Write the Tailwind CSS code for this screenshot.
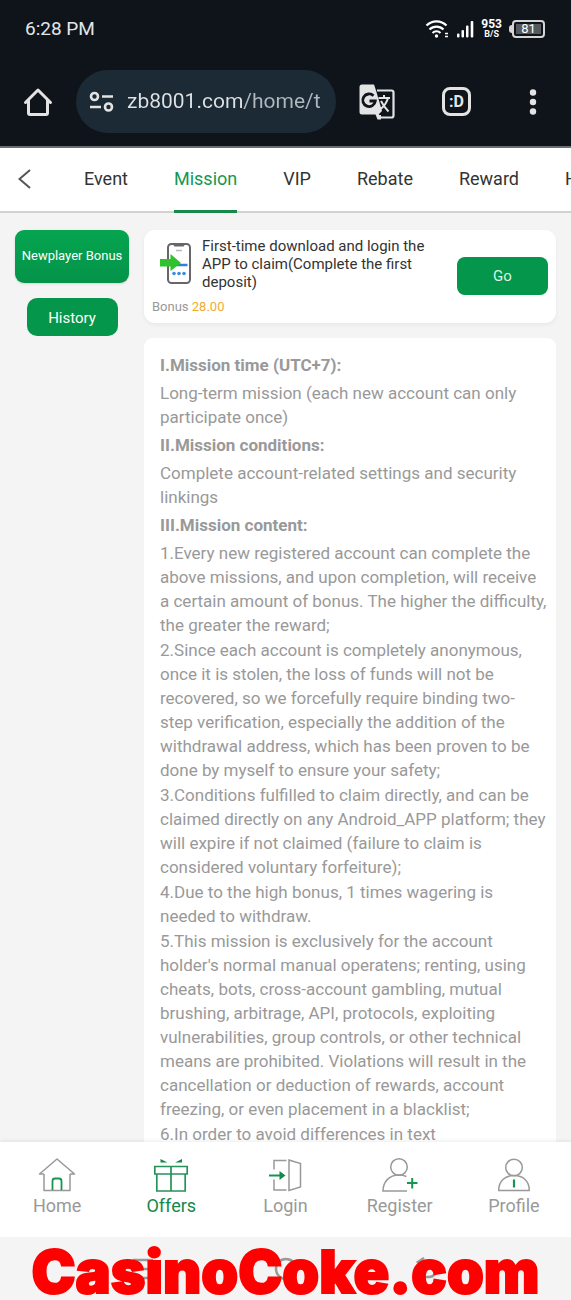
<!DOCTYPE html>
<html lang="en">
  <head>
    <meta charset="UTF-8" />
    <meta name="viewport" content="width=device-width, initial-scale=1.0" />
    <title>Mission - Offers</title>
    <script src="https://cdn.jsdelivr.net/npm/@tailwindcss/browser@4"></script>
  </head>
  <body class="bg-[#f4f4f4] font-[Roboto,'Noto_Sans',sans-serif] text-[#333]">
    <div class="relative flex h-screen flex-col overflow-hidden">
      <!-- Browser chrome -->
      <header class="shrink-0 border-b-2 border-[#6b6e72] bg-[#0f141b] text-[#e3e5e8]">
        <div class="flex h-[58px] items-center justify-between pr-[26px] pl-[25px]">
          <span class="text-[19px]">6:28 PM</span>
          <div class="flex items-center gap-[7px]">
            <svg class="h-[20px] w-[25px]" viewBox="0 0 25 20" fill="none" stroke="#fff" stroke-width="2.2" aria-hidden="true">
              <path d="M1.500 6.500a14 14 0 0 1 20 0M4.500 10.500a10 10 0 0 1 14 0M7.500 14a6 6 0 0 1 8 0" />
              <circle cx="11.500" cy="17" r="1.700" fill="#fff" stroke="none" />
              <path d="M20 14.500h3M20 17.500h3" stroke-width="1.500" />
            </svg>
            <svg class="h-[18px] w-[17px]" viewBox="0 0 17 18" fill="#fff" aria-hidden="true">
              <rect x="0" y="13.500" width="2.500" height="4" rx="1" />
              <rect x="4.500" y="10" width="2.500" height="7.500" rx="1" />
              <rect x="9" y="5.500" width="2.500" height="12" rx="1" />
              <rect x="13.700" y="1" width="2.600" height="16.500" rx="1" />
            </svg>
            <div class="flex flex-col items-center font-bold text-white">
              <span class="text-[12px] leading-[11px]">953</span>
              <span class="text-[9px] leading-[9px]">B/S</span>
            </div>
            <div class="flex items-center">
              <span class="h-[8px] w-[3px] rounded-l-sm bg-[#d5d5d5]"></span>
              <div class="flex h-[18px] w-[33px] items-center rounded-[4px] border-2 border-[#d5d5d5] p-[2px]">
                <span class="flex h-full w-full items-center justify-center bg-[#56595e] text-[13px] text-white">81</span>
              </div>
            </div>
          </div>
        </div>

        <div class="flex h-[88px] items-center pb-px">
          <button type="button" aria-label="Home page" class="flex w-[76px] justify-center">
            <svg class="h-[30px] w-[30px]" viewBox="0 0 30 30" fill="none" stroke="#e3e3e3" stroke-width="3" stroke-linejoin="round" stroke-linecap="round" aria-hidden="true">
              <path d="M2.500 15.500 15 3 27.500 15.500M5.500 13v13q0 1.500 1.500 1.500h16q1.500 0 1.500-1.500V13" />
            </svg>
          </button>
          <label class="flex h-[63px] min-w-0 flex-1 items-center gap-[13px] rounded-full bg-[#1b2a34] pr-2 pl-[13px]">
            <svg class="h-[22px] w-[25px] shrink-0" viewBox="0 0 25 22" fill="none" stroke="#e3e3e3" stroke-width="2.600" aria-hidden="true">
              <circle cx="5.500" cy="5.500" r="3.500" />
              <path d="M13 5.500h11M1 16h11" />
              <circle cx="19.500" cy="16" r="3.500" />
            </svg>
            <input type="text" aria-label="Address" value="zb8001.com/home/t" class="w-full min-w-0 bg-linear-to-r from-[#dfe3e6] from-58% to-[#b0b9bf] to-58% bg-clip-text text-[21px] text-transparent outline-none" />
          </label>
          <div class="flex w-[235px] items-center">
            <button type="button" aria-label="Translate" class="flex w-[82px] justify-center">
              <svg class="h-[36px] w-[36px]" viewBox="0 0 36 36" aria-hidden="true">
                <path d="M18 6.500h14.500q2 0 2 2v23q0 2-2 2H20l-3-7" fill="none" stroke="#e3e3e3" stroke-width="2.200" />
                <path d="M3 .500h12l2 6 6 20.500-4 4h3v4.500h-3.500L16.500 30.500H3Q.500 30.500 .500 28V3Q.500.500 3 .500Z" fill="#e3e3e3" />
                <path d="M14.500 11.800a6.300 6.300 0 1 0 1.800 5.200H10.500" fill="none" stroke="#0f141b" stroke-width="2.800" />
                <path d="M19.500 14H31M25 11v3M29 14q-2 7-8 11.500M22 17q3 6 7.500 10.500" fill="none" stroke="#e3e3e3" stroke-width="2" />
              </svg>
            </button>
            <button type="button" aria-label="Tabs" class="flex w-[77px] justify-center">
              <span class="flex h-[29px] w-[29px] items-center justify-center rounded-[8px] border-3 border-[#e3e3e3] text-[16px] font-bold">:D</span>
            </button>
            <button type="button" aria-label="More" class="flex w-[76px] justify-center">
              <svg class="h-[26px] w-[8px]" viewBox="0 0 8 26" fill="#e3e3e3" aria-hidden="true">
                <circle cx="4" cy="3.500" r="3.200" /><circle cx="4" cy="13" r="3.200" /><circle cx="4" cy="22.500" r="3.200" />
              </svg>
            </button>
          </div>
        </div>
      </header>

      <!-- Section tabs -->
      <nav class="flex h-[65px] shrink-0 overflow-hidden bg-white text-[18px] shadow-[inset_0_-2px_#d2d2d2]">
        <button type="button" aria-label="Back" class="w-[84px] shrink-0 pb-[3px] pl-[18px]">
          <svg class="h-[20px] w-[13px]" viewBox="0 0 13 20" fill="none" stroke="#555" stroke-width="2" aria-hidden="true">
            <path d="M12 1 1.500 10 12 19" />
          </svg>
        </button>
        <div class="flex shrink-0 gap-[46px] leading-[62px]">
          <a href="#event">Event</a>
          <a href="#mission" class="border-b-3 border-[#15884a] text-[#159750]">Mission</a>
          <a href="#vip">VIP</a>
          <a href="#rebate">Rebate</a>
          <a href="#reward">Reward</a>
          <a href="#history">History</a>
        </div>
      </nav>

      <main class="flex min-h-0 flex-1 gap-[15px] overflow-hidden px-[15px] pt-[17px]">
        <aside class="flex w-[114px] shrink-0 flex-col items-center gap-[15px] text-white">
          <button type="button" class="h-[53px] w-full rounded-[9px] bg-linear-to-b from-[#05a550] to-[#049349] pb-[2px] text-[13px] whitespace-nowrap shadow-sm">Newplayer Bonus</button>
          <button type="button" class="h-[38px] w-[91px] rounded-[10px] bg-[#04964a] pt-[2px] text-[15px]">History</button>
        </aside>

        <div class="flex min-w-0 flex-1 flex-col gap-[15px]">
          <section class="flex min-h-[93px] shrink-0 rounded-[11px] bg-white px-[8px] pt-[7px] shadow-[0_2px_4px_rgba(0,0,0,0.05)]">
            <div class="min-w-0 flex-1">
              <div class="flex items-center">
                <svg class="mr-[8px] h-[50px] w-[42px] shrink-0" viewBox="0 0 42 50" aria-hidden="true">
                  <rect x="16" y="5" width="22" height="39" rx="3.500" fill="#fff" stroke="#66666b" stroke-width="2" />
                  <path d="M21 5.500h12l-1.500 2h-9z" fill="#66666b" />
                  <path d="M24 11.500h6" stroke="#b5b5b8" stroke-width="1.500" />
                  <path d="M22 26h13.500" stroke="#2f80d8" stroke-width="2.500" />
                  <g fill="#3a8de0"><circle cx="22" cy="34.500" r="1.800" /><circle cx="27" cy="34.500" r="1.800" /><circle cx="32" cy="34.500" r="1.800" /></g>
                  <path d="M8 20h10.500v-5L29 24l-10.500 8v-4.500H8z" fill="#2fc22c" />
                </svg>
                <h1 class="text-[15px] leading-[18px]">First-time download and login the APP to claim(Complete the first deposit)</h1>
              </div>
              <p class="mt-[7px] text-[13px] leading-[18px] text-[#999]">Bonus <span class="text-[#efac2f]">28.00</span></p>
            </div>
            <button type="button" class="mt-[20px] ml-[20px] h-[38px] w-[91px] shrink-0 rounded-[8px] bg-[#04964a] text-[15px] text-[#d9f5e4]">Go</button>
          </section>

          <article class="shrink-0 rounded-t-[9px] bg-white pt-[15px] pr-[9px] pl-[16px] text-[17px] leading-[24px] text-[#999]">
            <h2 class="mb-[4px] font-bold">I.Mission time (UTC+7):</h2>
            <p class="mb-[4px]">Long-term mission (each new account can only participate once)</p>
            <h2 class="mb-[4px] font-bold">II.Mission conditions:</h2>
            <p class="mb-[4px]">Complete account-related settings and security linkings</p>
            <h2 class="mb-[4px] font-bold">III.Mission content:</h2>
            <div class="flex flex-col gap-px">
              <p>1.Every new registered account can complete the above missions, and upon completion, will receive a certain amount of bonus. The higher the difficulty, the greater the reward;</p>
              <p>2.Since each account is completely anonymous, once it is stolen, the loss of funds will not be recovered, so we forcefully require binding two-step verification, especially the addition of the withdrawal address, which has been proven to be done by myself to ensure your safety;</p>
              <p>3.Conditions fulfilled to claim directly, and can be claimed directly on any Android_APP platform; they will expire if not claimed (failure to claim is considered voluntary forfeiture);</p>
              <p>4.Due to the high bonus, 1 times wagering is needed to withdraw.</p>
              <p>5.This mission is exclusively for the account holder's normal manual operatens; renting, using cheats, bots, cross-account gambling, mutual brushing, arbitrage, API, protocols, exploiting vulnerabilities, group controls, or other technical means are prohibited. Violations will result in the cancellation or deduction of rewards, account freezing, or even placement in a blacklist;</p>
              <p>6.In order to avoid differences in text</p>
            </div>
          </article>
        </div>
      </main>

      <!-- Bottom navigation -->
      <nav class="grid h-[95px] shrink-0 grid-cols-5 bg-white pt-[14px] text-center text-[18px] leading-[24px] text-[#999] shadow-[0_-1px_4px_rgba(0,0,0,0.08)]">
        <a href="#home" class="flex flex-col items-center">
          <svg class="h-[38px] w-[40px]" viewBox="0 0 40 38" fill="none" stroke="#999" stroke-width="1.500" stroke-linejoin="round" aria-hidden="true">
            <path d="M7 18v16.500h26V18M7 18H2.500L20 3l17.500 15H33" />
            <path d="M15.500 34V25q0-2.500 2.500-2.500h4q2.500 0 2.500 2.500v9" stroke="#159750" stroke-width="1.800" />
          </svg>
          Home
        </a>
        <a href="#offers" class="flex flex-col items-center text-[#15884a]">
          <svg class="h-[38px] w-[40px]" viewBox="0 0 40 38" fill="none" stroke="#26915a" stroke-width="1.700" aria-hidden="true">
            <path d="M3.800 10.500h32.400v7.500H3.800zM5.800 18v17h28.400V18M20 10.500V35" />
            <path d="M9.500 3v3.500h7zM31 3v3.500h-7z" fill="#15884a" stroke="none" />
          </svg>
          Offers
        </a>
        <a href="#login" class="flex flex-col items-center">
          <svg class="h-[38px] w-[40px]" viewBox="0 0 40 38" fill="none" stroke="#999" stroke-width="1.500" aria-hidden="true">
            <path d="M21.500 4.500H9v9M9 23.500v10.500h12.500M24 4l11.500 3.500V31L24 34.500z" />
            <path d="M4 19.500h12" stroke="#159750" stroke-width="2" />
            <path d="M14.500 15l6 4.500-6 4.500z" fill="#15884a" stroke="none" />
          </svg>
          Login
        </a>
        <a href="#register" class="flex flex-col items-center">
          <svg class="h-[38px] w-[40px]" viewBox="0 0 40 38" fill="none" stroke="#999" stroke-width="1.500" aria-hidden="true">
            <circle cx="19" cy="11" r="8.300" />
            <path d="M26.500 20.500Q23 19 19 19C9 19 3 26 3 35h24" />
            <path d="M27 27h10.500M32.200 22v10.500" stroke="#159750" stroke-width="2" />
          </svg>
          Register
        </a>
        <a href="#profile" class="flex flex-col items-center">
          <svg class="h-[38px] w-[40px]" viewBox="0 0 40 38" fill="none" stroke="#999" stroke-width="1.500" aria-hidden="true">
            <circle cx="20" cy="11.500" r="8.300" />
            <path d="M4.800 34.500C4.500 25 11 19.500 20 19.500S35.500 25 35.200 34.500z" />
            <path d="M20 23.500v8" stroke="#159750" stroke-width="2.200" />
          </svg>
          Profile
        </a>
      </nav>

      <!-- System navigation with the site mark over it -->
      <footer class="relative h-[63px] shrink-0 bg-[#f4f4f4]">
        <div class="flex h-full items-center justify-between px-[23%]">
          <svg class="h-[24px] w-[24px]" viewBox="0 0 24 24" stroke="#999" stroke-width="2.500" aria-hidden="true">
            <path d="M2 3h20M2 12h20M2 21h20" />
          </svg>
          <svg class="h-[24px] w-[24px]" viewBox="0 0 24 24" fill="none" stroke="#999" stroke-width="2.500" aria-hidden="true">
            <circle cx="12" cy="12" r="10" />
          </svg>
          <svg class="h-[24px] w-[24px]" viewBox="0 0 24 24" fill="none" stroke="#999" stroke-width="2.500" aria-hidden="true">
            <path d="M8 1 2 5l6 4M2 5h11a7 7 0 0 1 0 15H5" />
          </svg>
        </div>
        <div class="absolute inset-x-0 bottom-[2px] text-center font-[Inter,sans-serif] text-[59px] leading-[52px] font-black text-[#f00] [-webkit-text-stroke:2px_#f00]">CasinoCoke.com</div>
      </footer>
    </div>
  </body>
</html>
